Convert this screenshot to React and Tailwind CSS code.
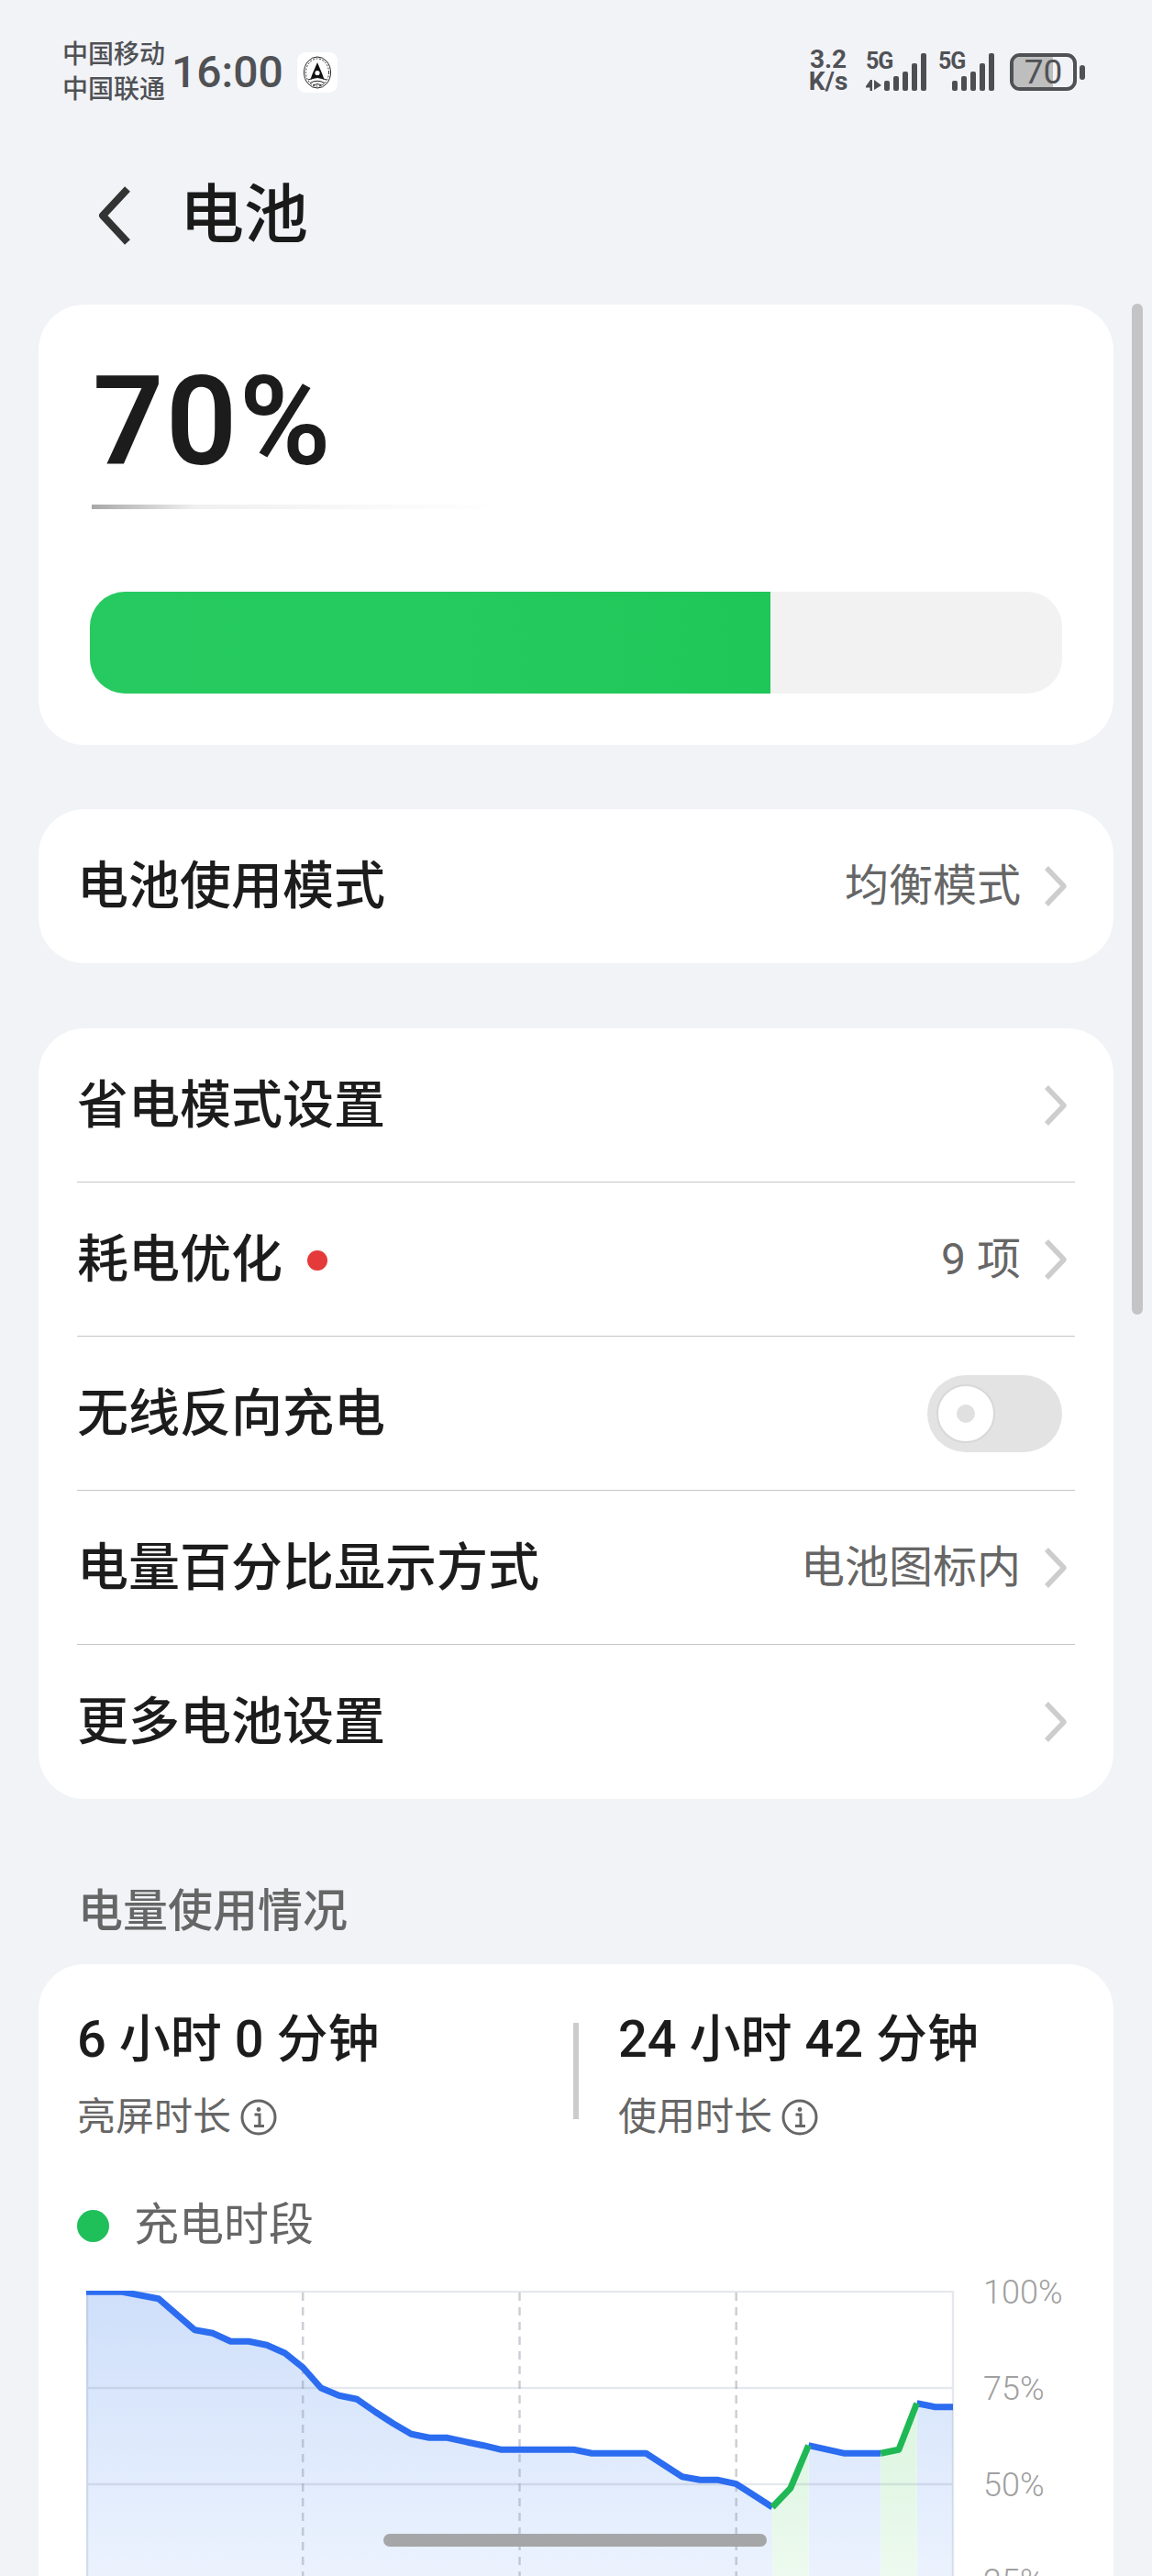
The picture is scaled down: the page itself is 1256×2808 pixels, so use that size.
const FONT = 'font-[Roboto,"Noto_Sans_CJK_SC",sans-serif]';

const pts = [
  [0,1.3],[2,1.3],[4,8.7],[6,42.7],[7,46.3],[8,55.3],[9,55.3],[10,59.3],[11,68],[12,83.7],[13,106],[14,114.3],[15,118.3],[16,132],[17,144.7],[18,156.3],[19,160.3],[20,160.3],[21,164.7],[22,168.7],[23,173.3],[27,173.3],[28,177.3],[31,177.3],[33,202.7],[34,206.3],[35,206.3],[36,210.7],[37,223.3],[38,236],
  [39,215.3],[40,168.7],[42,177.3],[44,177.3],[45,173.3],[46,122.7],[47,126.7],[48,126.7],
];
const STEP = 945 / 48;
const X = (n) => n * STEP;
const seg = (a, b) => pts.filter((p) => p[0] >= a && p[0] <= b);
const line = (s) => s.map((p) => `${X(p[0]).toFixed(1)},${p[1]}`).join(" ");
const area = (s) => `M${X(s[0][0]).toFixed(1)},420 L${line(s).replace(/ /g, " L")} L${X(s[s.length - 1][0]).toFixed(1)},420 Z`;
const blue = [seg(0, 38), seg(40, 44), seg(46, 48)];
const green = [seg(38, 40), seg(44, 46)];

function Chevron() {
  return (
    <svg width="26" height="46" viewBox="0 0 26 46" className="ml-[14px] shrink-0" fill="none">
      <path d="M3 3 L22 23 L3 43" stroke="#cdcdcd" strokeWidth="5.5" strokeLinejoin="round" />
    </svg>
  );
}

function Row({ label, value, dot, children, last }) {
  return (
    <div className="h-[168px] flex items-center pl-[42px] pr-[50px] relative">
      <span className="text-[56px] leading-none font-medium text-[#1c1c1c]">{label}</span>
      {dot && <span className="ml-[27px] mt-[2px] w-[22px] h-[22px] rounded-full bg-[#e53a3a]" />}
      <div className="ml-auto flex items-center">
        {value && <span className="text-[48px] leading-none text-[#666666] mr-[11px]">{value}</span>}
        {children || <Chevron />}
      </div>
      {!last && <div className="absolute left-[42px] right-[42px] bottom-0 h-[1px] bg-[#c6c6c6]" />}
    </div>
  );
}

function Info() {
  return (
    <svg width="40" height="40" viewBox="0 0 40 40" className="ml-[10px] shrink-0" fill="none">
      <circle cx="20" cy="20" r="18" stroke="#666666" strokeWidth="3" />
      <circle cx="20" cy="11.5" r="2.4" fill="#666666" />
      <path d="M15.5 17 H21 V29 M15 29.5 H26" stroke="#666666" strokeWidth="3" />
    </svg>
  );
}

function Bars() {
  const heights = [11, 16, 21, 30, 41];
  return (
    <div className="flex items-end gap-[4px] h-[41px]">
      {heights.map((h, i) => (
        <div key={i} className="w-[6px] rounded-[2px] bg-[#4d4e52]" style={{ height: h }} />
      ))}
    </div>
  );
}

function Status() {
  return (
    <div className="h-[130px] flex items-start pl-[68px] text-[#505155]">
      <div className="mt-[41px] flex flex-col text-[28px] leading-[38px] font-medium w-[112px] whitespace-nowrap">
        <span>中国移动</span>
        <span>中国联通</span>
      </div>
      <span className="mt-[51px] ml-[7px] text-[48px] leading-[56px] font-medium font-[Roboto]">16:00</span>
      <div className="mt-[57px] ml-[15px] w-[44px] h-[44px] rounded-[9px] bg-white flex items-center justify-center">
        <svg width="32" height="36" viewBox="0 0 32 36" fill="none">
          <ellipse cx="16" cy="18" rx="14.5" ry="17" stroke="#222" strokeWidth="1" />
          <ellipse cx="16" cy="18" rx="12.5" ry="15" stroke="#333" strokeWidth="1" strokeDasharray="2 1.5" />
          <path d="M16 7 C18 12 22 20 23.5 26 Q16 22 8.5 26 C10 20 14 12 16 7 Z" fill="#111" />
          <path d="M6 26 Q16 21 26 26 M8 29.5 Q16 25 24 29.5 M11 32 Q16 29 21 32" stroke="#222" strokeWidth="1" />
          <circle cx="16" cy="18.5" r="2.6" fill="#fff" />
        </svg>
      </div>
      <div className="ml-auto flex items-start mr-[73px]">
        <div className="mt-[53px] w-[46px] flex flex-col items-center text-[28px] leading-[24px] font-bold font-[Roboto]">
          <span>3.2</span>
          <span>K/s</span>
        </div>
        <div className="mt-[58px] ml-[18px] w-[66px] h-[41px] relative flex justify-end">
          <Bars />
          <span className="absolute left-0 -top-[3px] text-[25px] leading-[24px] font-bold font-[Roboto] tracking-[-1px]">5G</span>
          <svg className="absolute left-0 bottom-[0px]" width="18" height="13" viewBox="0 0 18 13">
            <path d="M0 8 L5 1 H7 V13 H4.5 V9.5 H0 Z M9 1 L17 7 L9 12 Z" fill="#4d4e52" />
          </svg>
        </div>
        <div className="mt-[58px] ml-[13px] w-[61px] h-[41px] relative flex justify-end">
          <Bars />
          <span className="absolute left-0 -top-[3px] text-[25px] leading-[24px] font-bold font-[Roboto] tracking-[-1px]">5G</span>
        </div>
        <div className="mt-[58px] ml-[17px] flex items-center">
          <div className="w-[73px] h-[41px] rounded-[11px] border-[4px] border-[#505155] overflow-hidden relative flex items-center justify-center">
            <div className="absolute left-0 top-0 bottom-0 w-[43px] bg-[#bebebe]" />
            <span className="relative text-[37px] leading-none font-normal font-[Roboto]">70</span>
          </div>
          <div className="ml-[3px] w-[6px] h-[16px] rounded-[3px] bg-[#505155]" />
        </div>
      </div>
    </div>
  );
}

function Chart() {
  return (
    <div className="flex mt-[45px] ml-[52px] items-start">
      <svg width="947" height="320" viewBox="0 0 947 320" className="shrink-0 overflow-hidden" fill="none">
        <defs>
          <linearGradient id="fillBlue" gradientUnits="userSpaceOnUse" x1="0" y1="0" x2="0" y2="320">
            <stop offset="0" stopColor="#cfdffa" />
            <stop offset="1" stopColor="#ecf3fe" />
          </linearGradient>
          <linearGradient id="fillGreen" gradientUnits="userSpaceOnUse" x1="0" y1="170" x2="0" y2="320">
            <stop offset="0" stopColor="#dff6e2" />
            <stop offset="1" stopColor="#eefaf0" />
          </linearGradient>
        </defs>
        {blue.map((s, i) => <path key={i} d={area(s)} fill="url(#fillBlue)" />)}
        {green.map((s, i) => <path key={i} d={area(s)} fill="url(#fillGreen)" />)}
        <g stroke="#7f8ca5" strokeOpacity="0.2" strokeWidth="2.5">
          <path d="M0 1 H945 V320 M0 106 H945 M0 211 H945 M1 1 V320" />
        </g>
        <g stroke="#99a0ae" strokeOpacity="0.5" strokeWidth="2.5" strokeDasharray="9 7">
          <path d="M236.2 2 V320 M472.5 2 V320 M708.7 2 V320" />
        </g>
        {blue.map((s, i) => <polyline key={i} points={line(s)} stroke="#2b6cf0" strokeWidth="7" strokeLinejoin="round" />)}
        {green.map((s, i) => <polyline key={i} points={line(s)} stroke="#1fb855" strokeWidth="7" strokeLinejoin="round" />)}
      </svg>
      <div className="ml-[31px] -mt-[13px] flex flex-col text-[36px] leading-[30px] font-light font-[Roboto] text-[#a0a0a0]">
        <span className="h-[105px]">100%</span>
        <span className="h-[105px]">75%</span>
        <span className="h-[105px]">50%</span>
        <span className="h-[105px]">25%</span>
      </div>
    </div>
  );
}

export default function App() {
  return (
    <div className={`relative w-[1256px] h-[2808px] overflow-hidden bg-[#f1f3f7] ${FONT}`}>
      <Status />
      <div className="h-[202px] flex items-start pl-[107px]">
        <svg width="36" height="66" viewBox="0 0 36 66" className="mt-[72px] shrink-0" fill="none">
          <path d="M32 4 L5 33 L32 62" stroke="#333333" strokeWidth="8" strokeLinejoin="round" />
        </svg>
        <span className="ml-[53px] mt-[70px] text-[70px] leading-[70px] font-medium text-[#1a1a1a]">电池</span>
      </div>

      <div className="mx-[42px] flex flex-col">
        <section className="h-[480px] rounded-[50px] bg-white pl-[56px] pr-[56px] relative">
          <div className="pt-[60px] text-[136px] leading-[136px] font-semibold font-[Roboto] tracking-[2px] text-[#1c1c1c] ml-[3px]">70%</div>
          <div className="mt-[22px] ml-[2px] h-[5px] w-[450px] bg-[linear-gradient(to_right,#a8a8a8,#f0f0f0_25%,#ffffff)]" />
          <div className="mt-[90px] h-[111px] rounded-[38px] bg-[#f2f2f2] overflow-hidden">
            <div className="h-full w-[742px] bg-gradient-to-r from-[#26ca60] via-[#25cb5e] to-[#1fc658]" />
          </div>
        </section>

        <section className="mt-[70px] rounded-[50px] bg-white">
          <Row label="电池使用模式" value="均衡模式" last />
        </section>

        <section className="mt-[71px] rounded-[50px] bg-white overflow-hidden">
          <Row label="省电模式设置" />
          <Row label="耗电优化" value="9 项" dot />
          <Row label="无线反向充电">
            <div className="relative w-[147px] h-[84px] rounded-full bg-[#e3e3e3] mr-[6px]">
              <div className="absolute left-[10px] top-[10px] w-[64px] h-[64px] rounded-full bg-white border-[2px] border-[#d8d8d8] flex items-center justify-center">
                <div className="w-[20px] h-[20px] rounded-full bg-[#e0e0e0]" />
              </div>
            </div>
          </Row>
          <Row label="电量百分比显示方式" value="电池图标内" />
          <Row label="更多电池设置" last />
        </section>

        <h2 className="mt-[97px] ml-[43px] text-[49px] leading-[52px] font-medium text-[#666666]">电量使用情况</h2>

        <section className="mt-[31px] rounded-t-[50px] bg-white h-[700px]">
          <div className="flex pt-[51px]">
            <div className="w-[583px] pl-[42px] flex items-start">
              <div>
                <div className="text-[56px] leading-[56px] font-medium text-[#1c1c1c] mt-[3px]">6 小时 0 分钟</div>
                <div className="mt-[35px] flex items-center text-[42px] leading-[44px] text-[#666666]">亮屏时长<Info /></div>
              </div>
            </div>
            <div className="w-[6px] h-[105px] mt-[13px] bg-[#cccccc]" />
            <div className="pl-[43px]">
              <div className="text-[56px] leading-[56px] font-medium text-[#1c1c1c] mt-[3px]">24 小时 42 分钟</div>
              <div className="mt-[35px] flex items-center text-[42px] leading-[44px] text-[#666666]">使用时长<Info /></div>
            </div>
          </div>
          <div className="mt-[70px] ml-[42px] flex items-center">
            <div className="w-[35px] h-[35px] rounded-full bg-[#1fc05a]" />
            <span className="ml-[27px] text-[49px] leading-[52px] text-[#666666]">充电时段</span>
          </div>
          <Chart />
        </section>
      </div>

      <div className="absolute left-[1234px] top-[331px] w-[12px] h-[1102px] rounded-[6px] bg-[#c4c4c6]" />
      <div className="absolute left-[418px] top-[2762px] w-[418px] h-[14px] rounded-full bg-[#a5a6a8]" />
    </div>
  );
}
